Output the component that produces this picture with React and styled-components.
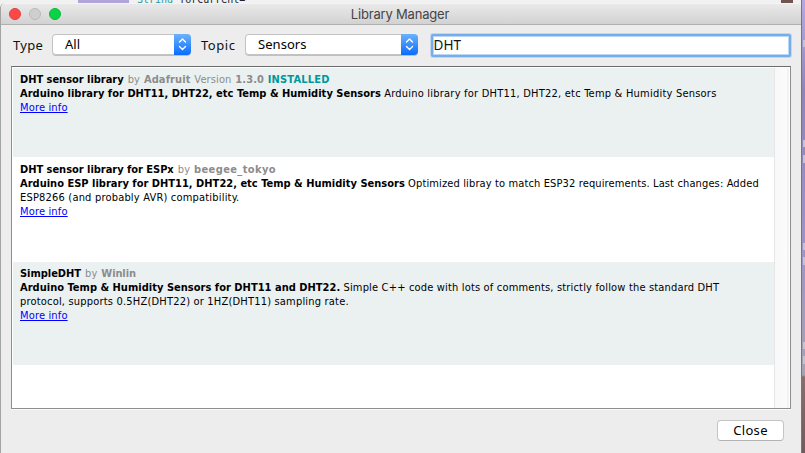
import React from "react";
import styled, { createGlobalStyle } from "styled-components";

const Global = createGlobalStyle`
  * { box-sizing: border-box; }
  body { margin: 0; overflow: hidden; background: #f2f2f2; }
`;

const Desktop = styled.div`
  width: 805px;
  height: 453px;
  display: grid;
  grid-template: 3px 1fr / 801px 4px;
  overflow: hidden;
`;
const EditorStrip = styled.div`
  display: flex;
  overflow: hidden;
  background: #f1f1f1;
`;
const Gap = styled.div`
  flex: none;
  width: ${(p) => p.$w}px;
  background: ${(p) => p.$c || "transparent"};
`;
const Code = styled.div`
  flex: none;
  width: 652px;
  padding-left: 8px;
  font: 10px/14px "DejaVu Sans Mono", monospace;
  white-space: pre;
  color: #222;
  margin-top: -7px;
`;
const TypeName = styled.span`color: #2a9a9e;`;
const Wallpaper = styled.div`
  grid-column: 2;
  grid-row: 1 / 3;
  display: flex;
  flex-direction: column;
  overflow: hidden;
  border-left: 1px solid #77728b;
  background: linear-gradient(#b5a8e0 0, #a79ed0 35px, #9086b2 90px, #9a90c2 200px, #a39abf 300px, #a5a2b5 375px, #8c6c6c 377px, #735a5a 453px);
`;
const Mark = styled.div`
  flex: none;
  width: 2px;
  margin-left: 1px;
  height: ${(p) => p.$h}px;
  margin-top: ${(p) => p.$gap}px;
  background: #c5c3cc;
`;

const Window = styled.main`
  display: flex;
  flex-direction: column;
  border-left: 1px solid #a3a3a3;
  border-radius: 5px 5px 0 0;
  background: #ededed;
  overflow: hidden;
`;
const TitleBar = styled.header`
  position: relative;
  height: 22px;
  flex: none;
  display: flex;
  align-items: center;
  justify-content: center;
  padding-right: 2px;
  border-top: 1px solid #f4f4f4;
  border-bottom: 1px solid #b0b0b0;
  background: linear-gradient(#e9e9e9, #d2d2d2);
  font: 13px "Inter", sans-serif;
  letter-spacing: -0.18px;
  color: #454545;
`;
const Lights = styled.div`
  position: absolute;
  left: 8px;
  top: 4px;
  display: flex;
  gap: 8px;
`;
const Light = styled.span`
  width: 12px;
  height: 12px;
  border-radius: 50%;
  background: ${(p) => p.$fill};
  border: 1px solid ${(p) => p.$edge};
`;

const Filters = styled.div`
  height: 41px;
  flex: none;
  display: flex;
  align-items: flex-start;
  padding: 9px 10px 0 12px;
  font: 13px "Noto Sans", sans-serif;
  color: #111;
`;
const Label = styled.label`
  width: ${(p) => p.$w}px;
  line-height: 22px;
  letter-spacing: ${(p) => p.$ls}px;
`;
const Select = styled.div`
  flex: none;
  display: flex;
  width: ${(p) => p.$w}px;
  height: 21px;
  margin-right: ${(p) => p.$after}px;
  border-radius: 4px;
  overflow: hidden;
  background: #fff;
  box-shadow: inset 0 0 0 1px #c3c3c3, 0 1px 0 #c0c0c0;
`;
const SelectText = styled.span`
  flex: 1;
  padding-left: 13px;
  line-height: 20px;
  letter-spacing: 0.05px;
  color: #000;
`;
const Stepper = styled.span`
  width: 17px;
  height: 21px;
  background: linear-gradient(#6bb3fa, #0a6cff);
  svg { display: block; }
`;
const Search = styled.div`
  flex: 1;
  height: 23px;
  border: 2px solid #76ade8;
  border-radius: 2px;
  box-shadow: inset 0 0 0 1px #b9d8f8, 0 0 0 1px #a9cdf4aa;
  background: #fff;
  padding-left: 0.5px;
  line-height: 19px;
  font-size: 13.5px;
  letter-spacing: 0.1px;
`;

const ListFrame = styled.section`
  flex: none;
  display: flex;
  width: 780px;
  height: 343px;
  margin-left: 10px;
  border: 1px solid #8e8e8e;
  border-top-color: #6c6c6c;
  padding: 1px 0 0 1px;
  background: #fff;
  box-shadow: 0 1px 0 #fafafa;
`;
const Rows = styled.div`
  width: 761px;
  font: 11px/14px "DejaVu Sans Condensed", "DejaVu Sans", sans-serif;
  font-stretch: condensed;
`;
const Row = styled.article`
  height: ${(p) => p.$h}px;
  padding: ${(p) => p.$top}px 0 0 7px;
  background: ${(p) => (p.$tinted ? "#ebf1f1" : "#fff")};
  color: #000;
  white-space: nowrap;
`;
const Line = styled.div`
  height: 14px;
  letter-spacing: ${(p) => p.$ls ?? 0.12}px;
`;
const Strong = styled.b`letter-spacing: ${(p) => p.$ls ?? 0.02}px;`;
const Name = styled.b`
  letter-spacing: -0.03px;
  margin-right: 0.8px;
`;
const Muted = styled.span`
  color: #8c8c8c;
  word-spacing: 0.6px;
`;
const Installed = styled.b`
  color: #00979c;
  letter-spacing: 0.18px;
  margin-left: 0.4px;
`;
const More = styled.a`
  color: #0000ff;
  text-decoration: underline;
  letter-spacing: 0.16px;
`;
const Track = styled.div`
  flex: 1;
  border-left: 1px solid #e6e6e6;
  border-right: 1px solid #fff;
  background: linear-gradient(90deg, #f8f8f8, #fbfbfb 85%, #ececec 92%, #fafafa);
`;

const Footer = styled.footer`
  display: flex;
  justify-content: flex-end;
  padding: 11px 17px 0 0;
`;
const CloseButton = styled.button`
  width: 67px;
  height: 21px;
  border: 1px solid #c4c4c4;
  border-bottom-color: #b2b2b2;
  border-radius: 4px;
  background: #fff;
  padding: 0 0 1px;
  font: 13px/18px "Noto Sans", sans-serif;
  letter-spacing: 0.35px;
  color: #000;
`;

const Arrows = () => (
  <Stepper>
    <svg width="17" height="21" viewBox="0 0 17 21" fill="none" stroke="#fff" strokeWidth="1.4" strokeLinecap="round" strokeLinejoin="round">
      <path d="M5.5 8 8.5 5l3 3M5.5 12.5l3 3 3-3" />
    </svg>
  </Stepper>
);

export default function App() {
  return (
    <>
      <Global />
      <Desktop>
        <EditorStrip>
          <Gap $w={78} />
          <Gap $w={51} $c="#b0a4d8" />
          <Code><TypeName>String</TypeName> forCurrent=</Code>
          <Gap $w={12} $c="#72544f" />
        </EditorStrip>
        <Wallpaper>
          <Mark $gap={40} $h={7} />
          <Mark $gap={93} $h={7} />
          <Mark $gap={8} $h={8} />
          <Mark $gap={80} $h={7} />
          <Mark $gap={7} $h={8} />
          <Mark $gap={77} $h={7} />
          <Mark $gap={7} $h={8} />
        </Wallpaper>
        <Window>
          <TitleBar>
            <Lights>
              <Light $fill="#fc4948" $edge="#e2403e" />
              <Light $fill="#cfcfcf" $edge="#bababa" />
              <Light $fill="#09d346" $edge="#12b53c" />
            </Lights>
            Library Manager
          </TitleBar>
          <Filters>
            <Label $w={39} $ls={0.3}>Type</Label>
            <Select $w={139} $after={10}><SelectText>All</SelectText><Arrows /></Select>
            <Label $w={44} $ls={0.55}>Topic</Label>
            <Select $w={173} $after={13}><SelectText>Sensors</SelectText><Arrows /></Select>
            <Search>DHT</Search>
          </Filters>
          <ListFrame>
            <Rows>
              <Row $tinted $h={89} $top={5}>
                <Line>
                  <Name>DHT sensor library</Name> <Muted>by <Strong $ls={0.1}>Adafruit</Strong> Version <Strong $ls={0.1}>1.3.0</Strong></Muted> <Installed>INSTALLED</Installed>
                </Line>
                <Line $ls={0.22}><Strong>Arduino library for DHT11, DHT22, etc Temp &amp; Humidity Sensors</Strong> Arduino library for DHT11, DHT22, etc Temp &amp; Humidity Sensors</Line>
                <Line><More>More info</More></Line>
              </Row>
              <Row $h={105} $top={6}>
                <Line><Name>DHT sensor library for ESPx</Name> <Muted>by <Strong $ls={0.38}>beegee_tokyo</Strong></Muted></Line>
                <Line $ls={0.13}><Strong $ls={0.01}>Arduino ESP library for DHT11, DHT22, etc Temp &amp; Humidity Sensors</Strong> Optimized libray to match ESP32 requirements. Last changes: Added</Line>
                <Line $ls={0.19}>ESP8266 (and probably AVR) compatibility.</Line>
                <Line><More>More info</More></Line>
              </Row>
              <Row $tinted $h={103} $top={5}>
                <Line><Name>SimpleDHT</Name> <Muted>by <Strong $ls={-0.1}>Winlin</Strong></Muted></Line>
                <Line $ls={0.17}><Strong>Arduino Temp &amp; Humidity Sensors for DHT11 and DHT22.</Strong> Simple C++ code with lots of comments, strictly follow the standard DHT</Line>
                <Line $ls={0.19}>protocol, supports 0.5HZ(DHT22) or 1HZ(DHT11) sampling rate.</Line>
                <Line><More>More info</More></Line>
              </Row>
            </Rows>
            <Track />
          </ListFrame>
          <Footer><CloseButton>Close</CloseButton></Footer>
        </Window>
      </Desktop>
    </>
  );
}
